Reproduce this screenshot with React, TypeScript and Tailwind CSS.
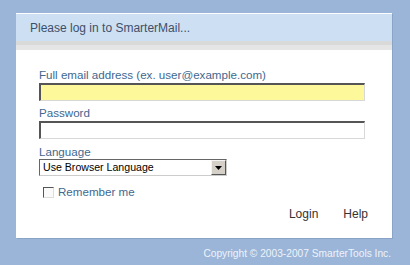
import React from "react";

export default function App() {
  return (
    <div
      className="w-[410px] h-[265px] bg-[#9ab5d8] overflow-hidden flex flex-col"
      style={{ fontFamily: '"Liberation Sans", Arial, sans-serif' }}
    >
      <div className="ml-[16px] mt-[13px] w-[376px] h-[225px] bg-white flex flex-col shadow-[1px_1px_0_#8aa4c8]">
        <div className="mt-px h-[27px] bg-[#cddff2] flex items-center pl-[14px] text-[12px] text-[#3d4f6b]">
          Please log in to SmarterMail...
        </div>
        <div className="h-[9px] flex flex-col">
          <div className="h-[4px] bg-[#d9d9d9]" />
          <div className="h-[5px] bg-[#e5e5e5]" />
        </div>
        <div className="flex flex-col pl-[23px] pt-[18px]">
          <div className="text-[11.6px] leading-[14px] text-[#41688f]">
            Full email address (ex. user@example.com)
          </div>
          <div className="mt-px w-[326px] h-[18px] bg-[#fdf99b] border-t-2 border-l-2 border-t-[#555] border-l-[#555] border-b border-r border-b-[#d8d8d8] border-r-[#d8d8d8]" />
          <div className="mt-[5px] text-[11.6px] leading-[14px] text-[#41688f]">Password</div>
          <div className="mt-px w-[326px] h-[18px] bg-white border-t-2 border-l-2 border-t-[#555] border-l-[#555] border-b border-r border-b-[#d8d8d8] border-r-[#d8d8d8]" />
          <div className="mt-[6px] text-[11.6px] leading-[14px] text-[#41688f]">Language</div>
          <div className="mt-0 w-[188px] h-[17px] flex bg-white border-t border-l border-t-[#666] border-l-[#666] border-b border-r border-b-[#ccc] border-r-[#ccc]">
            <div className="flex-1 flex items-center pl-[3px] text-[10.6px] text-black leading-none">
              Use Browser Language
            </div>
            <div className="w-[15px] h-full bg-[#d4d0c8] border-t border-l border-t-[#f4f4f4] border-l-[#f4f4f4] border-b border-r border-b-[#555] border-r-[#555] flex items-center justify-center">
              <svg width="7" height="4" viewBox="0 0 7 4">
                <path d="M0 0 H7 L3.5 4 Z" fill="#000" />
              </svg>
            </div>
          </div>
          <div className="mt-[9px] ml-[4px] flex items-center">
            <div className="w-[11px] h-[11px] bg-[#fafafa] border-t border-l border-t-[#555] border-l-[#555] border-b border-r border-b-[#ddd] border-r-[#ddd]" />
            <span className="ml-[4px] text-[11.6px] leading-[14px] text-[#41688f]">Remember me</span>
          </div>
          <div className="mt-[8px] flex justify-end pr-[24px] gap-[25px] text-[12px] leading-[14px] text-[#333]">
            <span>Login</span>
            <span>Help</span>
          </div>
        </div>
      </div>
      <div className="mt-[9px] w-[391px] flex justify-end text-[10.2px] leading-[13px] text-[#eef3fa]">
        Copyright © 2003-2007 SmarterTools Inc.
      </div>
    </div>
  );
}
